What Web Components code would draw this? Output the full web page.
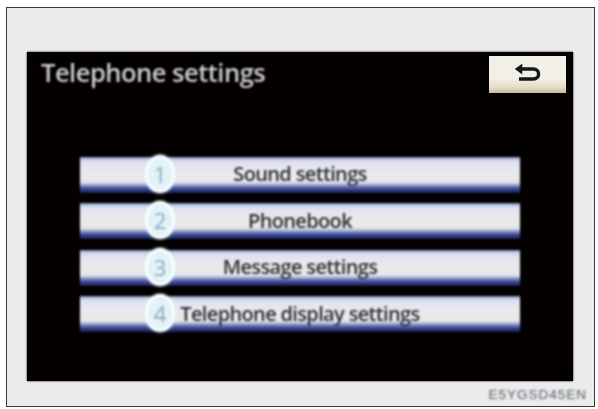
<!DOCTYPE html>
<html><head><meta charset="utf-8"><style>
html,body{margin:0;padding:0;background:#fff}
body{width:598px;height:409px;overflow:hidden;font-family:"Open Sans","Liberation Sans",sans-serif}
</style></head><body>
<manual-figure>
  <phone-screen title-text="Telephone settings">
    <menu-row num="1">Sound settings</menu-row>
    <menu-row num="2">Phonebook</menu-row>
    <menu-row num="3">Message settings</menu-row>
    <menu-row num="4">Telephone display settings</menu-row>
  </phone-screen>
  <span slot="code">E5YGSD45EN</span>
</manual-figure>
<script>
function def(name,html,init){
  customElements.define(name,class extends HTMLElement{
    constructor(){super();this.attachShadow({mode:'open'}).innerHTML=html;}
    connectedCallback(){if(init)init(this);}
  });
}
def('manual-figure',`<style>
:host{display:flex;flex-direction:column;box-sizing:border-box;width:589px;height:400px;margin:7px 0 0 6px;
 border:1.5px solid #3a3a3a;background:#e9ebec;padding:43.5px 20px 0 20px;filter:blur(.35px)}
.code{display:flex;justify-content:flex-end;margin:5px -13px 0 0;font:13.5px/18px "Liberation Sans",sans-serif;color:#5a5d62;filter:blur(1.1px);letter-spacing:1px}
</style><slot></slot><div class="code"><slot name="code"></slot></div>`);
def('phone-screen',`<style>
:host{display:flex;flex-direction:column;box-sizing:border-box;width:546px;height:329px;background:#040000;
 box-shadow:0 0 2px #222;padding:4px 7px 0 14px;color:#d6d6d4}
.head{display:flex;justify-content:space-between;align-items:flex-start;height:101px}
h1{margin:0;font:600 25.5px/32px "Open Sans","Liberation Sans",sans-serif;letter-spacing:-.5px;color:#cfcfcd;filter:blur(1px)}
.back{display:flex;align-items:center;justify-content:center;width:77px;height:37px;filter:blur(.7px);
 background:linear-gradient(#f1efe8 0,#f0efe8 60%,#e4dcc6 85%,#cbb99a 100%)}
.list{display:flex;flex-direction:column;gap:10.67px;margin-left:39px;width:440px}
</style><div class="head"><h1 id="t"></h1>
<div class="back"><svg width="32" height="20" viewBox="0 0 32 20" fill="none" stroke="#17171a" stroke-width="3.4"><path d="M6 5H21C28.500 5 28.500 15 21 15H7"/><path d="M9.500 1 4 5 9.500 9Z" stroke-width="1.500" fill="#17171a"/></svg></div></div>
<div class="list"><slot></slot></div>`,el=>{el.shadowRoot.getElementById('t').textContent=el.getAttribute('title-text')});
def('menu-row',`<style>
:host{display:block;height:36px;position:relative;filter:blur(.9px);color:#2e3034;
 background:linear-gradient(#6f7fb0 0,#d3d8ee 8%,#e4e5ef 22%,#eceae8 55%,#e3e6ea 70%,#a9b7d8 76%,#4a55a0 86%,#161a50 100%)}
.row{display:flex;box-sizing:border-box;height:36px;padding-bottom:1px;align-items:center;justify-content:center;
 font:600 20px/30px "Open Sans","Liberation Sans",sans-serif;letter-spacing:-.65px}
.n{position:absolute;left:65px;top:-2px;width:30px;height:38px;box-sizing:border-box;border-radius:50%;background:#e4f1f6;border:3px solid #f8ffff;box-shadow:0 0 3px #dff4fb;
 display:flex;align-items:center;justify-content:center;font:22px/1 "Open Sans","Liberation Sans",sans-serif;color:#86aec2}
</style><div class="row"><span><slot></slot></span></div><div class="n" id="n"></div>`,el=>{el.shadowRoot.getElementById('n').textContent=el.getAttribute('num')});
</script>
</body></html>
